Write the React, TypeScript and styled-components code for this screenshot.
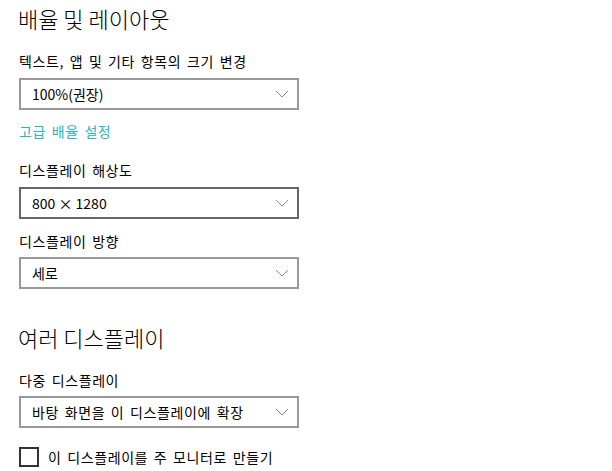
import { FunctionComponent } from "react";
import styled, { createGlobalStyle } from "styled-components";

const GlobalStyle = createGlobalStyle`
  html, body {
    margin: 0;
    padding: 0;
    background: #ffffff;
  }
  body {
    font-family: "Noto Sans CJK KR", "Noto Sans", sans-serif;
    color: #000000;
  }
`;

const Page = styled.div`
  display: flex;
  flex-direction: column;
  padding: 4px 19px 0;
  width: 612px;
  box-sizing: border-box;
`;

const SectionTitle = styled.h2<{ $top?: number }>`
  margin: ${(p) => p.$top ?? 0}px 0 0 -1px;
  font-size: 22px;
  font-weight: 300;
  line-height: 28px;
`;

const Label = styled.div<{ $top: number }>`
  margin-top: ${(p) => p.$top}px;
  font-size: 14px;
  line-height: 20px;
  letter-spacing: 0.6px;
  word-spacing: 2px;
`;

const SelectBox = styled.div<{ $hover?: boolean; $top: number; $spaced?: boolean }>`
  margin-top: ${(p) => p.$top}px;
  width: 280px;
  height: 32px;
  box-sizing: border-box;
  border: 2px solid ${(p) => (p.$hover ? "#666666" : "#999999")};
  display: flex;
  align-items: center;
  justify-content: space-between;
  padding: 0 8px 0 11px;
  font-size: 14px;
  letter-spacing: ${(p) => (p.$spaced ? "0.6px" : "0")};
  word-spacing: ${(p) => (p.$spaced ? "2px" : "0")};
  background: #ffffff;
`;

const LinkText = styled.a`
  margin-top: 11px;
  font-size: 14px;
  line-height: 20px;
  letter-spacing: 0.6px;
  word-spacing: 2px;
  color: #2ab5c6;
  text-decoration: none;
  cursor: pointer;
`;

const CheckRow = styled.label`
  margin-top: 19px;
  display: flex;
  align-items: center;
  gap: 9px;
  font-size: 14px;
  line-height: 20px;
  letter-spacing: 0.6px;
  word-spacing: 2px;
`;

const CheckBox = styled.span`
  width: 20px;
  height: 20px;
  box-sizing: border-box;
  border: 2px solid #333333;
`;

const Chevron: FunctionComponent = () => (
  <svg width="14" height="8" viewBox="0 0 14 8">
    <polyline
      points="1,1 7,7 13,1"
      fill="none"
      stroke="#8a8a8a"
      strokeWidth="1"
    />
  </svg>
);

interface SelectProps {
  value: string;
  top: number;
  hover?: boolean;
  spaced?: boolean;
}

const Select: FunctionComponent<SelectProps> = ({ value, top, hover, spaced }) => (
  <SelectBox $top={top} $hover={hover} $spaced={spaced}>
    <span>{value}</span>
    <Chevron />
  </SelectBox>
);

const App: FunctionComponent = () => {
  return (
    <>
      <GlobalStyle />
      <Page>
        <SectionTitle>배율 및 레이아웃</SectionTitle>
        <Label $top={19}>텍스트, 앱 및 기타 항목의 크기 변경</Label>
        <Select top={7} value="100%(권장)" />
        <LinkText>고급 배율 설정</LinkText>

        <Label $top={19}>디스플레이 해상도</Label>
        <Select top={7} value="800 × 1280" hover />
        <Label $top={12}>디스플레이 방향</Label>
        <Select top={6} value="세로" />

        <SectionTitle $top={34}>여러 디스플레이</SectionTitle>
        <Label $top={19}>다중 디스플레이</Label>
        <Select top={6} value="바탕 화면을 이 디스플레이에 확장" spaced />
        <CheckRow>
          <CheckBox />
          이 디스플레이를 주 모니터로 만들기
        </CheckRow>
      </Page>
    </>
  );
};

export default App;
